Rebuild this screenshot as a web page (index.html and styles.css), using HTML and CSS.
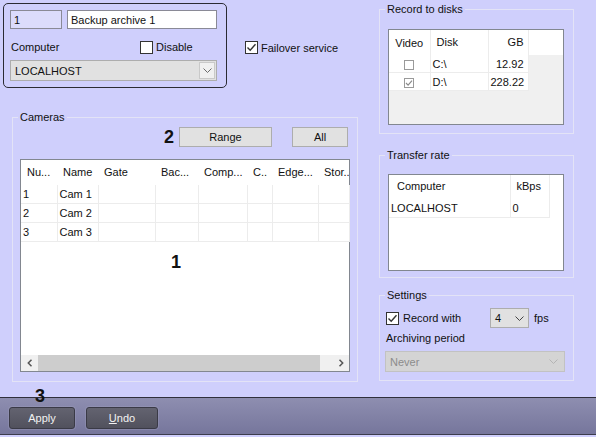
FILE: index.html
```html
<!DOCTYPE html>
<html lang="en">
<head>
    <meta charset="UTF-8">
    <meta name="viewport" content="width=device-width, initial-scale=1.0">
    <title>Backup archive</title>
    <link rel="stylesheet" href="styles.css">
</head>
<body>

<div class="window">
    <div class="main">
        <!-- Left side: archive header and camera list -->
        <div class="left-col">
            <div class="top-row">
                <div class="archive-frame">
                    <div class="frame-row">
                        <input class="field id-input" type="text" value="1">
                        <input class="field name-input" type="text" value="Backup archive 1">
                    </div>
                    <div class="frame-row computer-row">
                        <span class="computer-label">Computer</span>
                        <label class="check"><span class="box"></span>Disable</label>
                    </div>
                    <div class="select host-select">
                        <span>LOCALHOST</span>
                        <span class="drop-btn">
                            <svg width="9" height="5" viewBox="0 0 9 5"><path d="M0.5 0.5 L4.5 4.5 L8.5 0.5" fill="none" stroke="#6b6b6b"/></svg>
                        </span>
                    </div>
                </div>
                <label class="check failover">
                    <span class="box">
                        <svg width="11" height="11" viewBox="0 0 11 11"><path d="M1.5 5.5 L4.2 8.2 L9.5 2.2" fill="none" stroke="#333" stroke-width="1.4"/></svg>
                    </span>Failover service
                </label>
            </div>

            <fieldset class="group cameras">
                <legend>Cameras</legend>
                <div class="cam-buttons">
                    <span class="marker">2</span>
                    <button class="btn range-btn">Range</button>
                    <button class="btn all-btn">All</button>
                </div>
                <div class="cam-list">
                    <table class="cam-table">
                        <colgroup>
                            <col style="width:36px"><col style="width:41px"><col style="width:57px"><col style="width:43px">
                            <col style="width:49px"><col style="width:25px"><col style="width:46px"><col style="width:31px">
                        </colgroup>
                        <tr class="head">
                            <th>Nu...</th><th>Name</th><th>Gate</th><th>Bac...</th><th>Comp...</th><th>C..</th><th>Edge...</th><th>Stor..</th>
                        </tr>
                        <tr><td>1</td><td>Cam 1</td><td></td><td></td><td></td><td></td><td></td><td></td></tr>
                        <tr><td>2</td><td>Cam 2</td><td></td><td></td><td></td><td></td><td></td><td></td></tr>
                        <tr><td>3</td><td>Cam 3</td><td></td><td></td><td></td><td></td><td></td><td></td></tr>
                    </table>
                    <span class="marker marker-1">1</span>
                    <div class="hscroll">
                        <span class="scroll-arrow">
                            <svg width="6" height="8" viewBox="0 0 6 8"><path d="M4.5 0.8 L1.3 4 L4.5 7.2" fill="none" stroke="#555" stroke-width="1.5"/></svg>
                        </span>
                        <span class="thumb"></span>
                        <span class="scroll-arrow right">
                            <svg width="6" height="8" viewBox="0 0 6 8"><path d="M1.5 0.8 L4.7 4 L1.5 7.2" fill="none" stroke="#555" stroke-width="1.5"/></svg>
                        </span>
                    </div>
                </div>
            </fieldset>
        </div>

        <!-- Right side: disks, transfer rate, settings -->
        <div class="right-col">
            <fieldset class="group disks">
                <legend>Record to disks</legend>
                <div class="list disk-list">
                    <table class="list-table">
                        <colgroup>
                            <col style="width:41px"><col style="width:58px"><col style="width:40px"><col>
                        </colgroup>
                        <tr class="head">
                            <th class="center">Video</th><th class="disk-h">Disk</th><th class="num">GB</th><th></th>
                        </tr>
                        <tr>
                            <td class="center"><span class="mini-box"></span></td><td>C:\</td><td class="num">12.92</td><td class="empty"></td>
                        </tr>
                        <tr>
                            <td class="center">
                                <span class="mini-box">
                                    <svg width="8" height="8" viewBox="0 0 8 8"><path d="M1 4 L3.1 6.1 L7 1.6" fill="none" stroke="#8a8a8a" stroke-width="1.2"/></svg>
                                </span>
                            </td><td>D:\</td><td class="num">228.22</td><td class="empty"></td>
                        </tr>
                    </table>
                </div>
            </fieldset>

            <fieldset class="group transfer">
                <legend>Transfer rate</legend>
                <div class="list rate-list">
                    <table class="list-table rate-table">
                        <colgroup>
                            <col style="width:121px"><col style="width:39px"><col>
                        </colgroup>
                        <tr class="head">
                            <th class="comp-h">Computer</th><th class="kbps-h">kBps</th><th class="empty"></th>
                        </tr>
                        <tr>
                            <td>LOCALHOST</td><td>0</td><td class="empty"></td>
                        </tr>
                    </table>
                </div>
            </fieldset>

            <fieldset class="group settings">
                <legend>Settings</legend>
                <div class="fps-row">
                    <label class="check record-check">
                        <span class="box">
                            <svg width="11" height="11" viewBox="0 0 11 11"><path d="M1.5 5.5 L4.2 8.2 L9.5 2.2" fill="none" stroke="#333" stroke-width="1.4"/></svg>
                        </span>Record with
                    </label>
                    <div class="select fps-select">
                        <span>4</span>
                        <svg width="9" height="5" viewBox="0 0 9 5"><path d="M0.5 0.5 L4.5 4.5 L8.5 0.5" fill="none" stroke="#444"/></svg>
                    </div>
                    <span class="fps-label">fps</span>
                </div>
                <div class="period-label">Archiving period</div>
                <div class="select period-select">
                    <span>Never</span>
                    <svg width="9" height="5" viewBox="0 0 9 5"><path d="M0.5 0.5 L4.5 4.5 L8.5 0.5" fill="none" stroke="#b4b4b4"/></svg>
                </div>
            </fieldset>
        </div>
    </div>

    <div class="bottom-bar">
        <button class="bar-btn apply-btn">Apply</button>
        <button class="bar-btn undo-btn"><span class="hotkey">U</span>ndo</button>
    </div>
    <span class="marker marker-3">3</span>
</div>

</body>
</html>
```

FILE: styles.css
```css
body {
    margin: 0;
    background-color: #cfcffc;
    font-family: "Liberation Sans", Arial, sans-serif;
    font-size: 11px;
    color: #111;
}
.window {
    position: relative;
    width: 596px;
    height: 437px;
    overflow: hidden;
}
.main {
    display: flex;
    height: 397px;
}
.left-col {
    width: 379px;
    flex: none;
}
.right-col {
    width: 195px;
    padding-top: 2px;
}

/* header frame */
.top-row {
    display: flex;
    align-items: flex-start;
    padding-top: 3px;
    height: 85px;
}
.archive-frame {
    margin-left: 3px;
    width: 224px;
    height: 85px;
    box-sizing: border-box;
    border: 1px solid #2b2b33;
    border-radius: 5px;
    padding: 6px 0 0 6px;
}
.frame-row {
    display: flex;
    align-items: center;
}
.field {
    box-sizing: border-box;
    height: 19px;
    margin: 0;
    padding: 0 3px;
    font: inherit;
    color: #111;
    border: 1px solid #8a8a96;
    outline: none;
}
.id-input {
    width: 52px;
    background-color: #dcdcfc;
}
.name-input {
    width: 150px;
    margin-left: 5px;
    background-color: #fff;
}
.computer-row {
    margin-top: 11px;
    height: 14px;
}
.computer-label {
    width: 129px;
    padding-left: 1px;
}
.check {
    display: flex;
    align-items: center;
    gap: 3px;
}
.box {
    width: 13px;
    height: 13px;
    box-sizing: border-box;
    border: 1px solid #333;
    background-color: #fff;
    display: flex;
    align-items: center;
    justify-content: center;
}
.failover {
    margin: 38px 0 0 18px;
}

.select {
    box-sizing: border-box;
    display: flex;
    align-items: center;
    justify-content: space-between;
    background-color: #e1e1e1;
    border: 1px solid #adadad;
    padding: 0 0 0 4px;
}
.host-select {
    width: 207px;
    height: 21px;
    margin-top: 6px;
}
.drop-btn {
    width: 16px;
    height: 17px;
    margin-right: 1px;
    box-sizing: border-box;
    border: 1px solid #c9c9c9;
    background-color: #f0f0f0;
    display: flex;
    align-items: center;
    justify-content: center;
}

/* group boxes */
.group {
    margin: 0;
    min-width: 0;
    box-sizing: border-box;
    border: 1px solid #e3e3f6;
}
.group legend {
    padding: 0 2px;
    line-height: 14px;
}
.cameras {
    margin: 22px 0 0 12px;
    width: 346px;
    padding: 3px 7px 9px 7px;
}
.cameras legend {
    margin-left: -2px;
}
.cam-buttons {
    display: flex;
    justify-content: flex-end;
    align-items: center;
    height: 20px;
    padding-right: 2px;
}
.marker {
    font-size: 18px;
    font-weight: bold;
    line-height: 18px;
    color: #111;
}
.btn {
    box-sizing: border-box;
    height: 20px;
    margin: 0;
    padding: 0;
    font: inherit;
    color: #111;
    background-color: #e1e1e1;
    border: 1px solid #adadad;
}
.range-btn {
    width: 93px;
    margin-left: 5px;
}
.all-btn {
    width: 56px;
    margin-left: 20px;
}

/* camera list */
.cam-list {
    position: relative;
    margin-top: 12px;
    width: 330px;
    height: 213px;
    box-sizing: border-box;
    border: 1px solid #828790;
    background-color: #fff;
    display: flex;
    flex-direction: column;
}
.cam-table {
    border-collapse: collapse;
    table-layout: fixed;
    width: 328px;
}
.cam-table th {
    height: 24px;
    padding: 0 0 1px 6px;
    text-align: left;
    font-weight: normal;
    white-space: nowrap;
    overflow: hidden;
}
.cam-table td {
    height: 18px;
    padding: 0 2px;
    border-right: 1px solid #ececec;
    border-bottom: 1px solid #ececec;
    white-space: nowrap;
}
.marker-1 {
    position: absolute;
    left: 150px;
    top: 93px;
}
.hscroll {
    margin-top: auto;
    height: 16px;
    display: flex;
    background-color: #f0f0f0;
}
.scroll-arrow {
    width: 17px;
    display: flex;
    align-items: center;
    justify-content: center;
}
.scroll-arrow.right {
    margin-left: auto;
}
.thumb {
    width: 282px;
    background-color: #cdcdcd;
}

/* small lists on the right */
.disks {
    width: 195px;
    padding: 13px 9px 8px 8px;
}
.disks legend {
    margin-left: -3px;
}
.transfer {
    width: 195px;
    margin-top: 14px;
    padding: 12px 9px 6px 8px;
}
.transfer legend {
    margin-left: -3px;
}
.list {
    box-sizing: border-box;
    width: 176px;
    border: 1px solid #828790;
}
.disk-list {
    height: 96px;
    background-color: #f0f0f0;
}
.rate-list {
    height: 97px;
    background-color: #fff;
}
.list-table {
    border-collapse: collapse;
    table-layout: fixed;
    width: 174px;
}
.list-table th {
    height: 24px;
    font-weight: normal;
    text-align: left;
    background-color: #fff;
    border-right: 1px solid #ececec;
    padding: 0 0 1px 6px;
}
.list-table td {
    height: 17px;
    background-color: #fff;
    border-right: 1px solid #ececec;
    border-bottom: 1px solid #ececec;
    padding: 0 2px;
}
.list-table .center {
    text-align: center;
    padding: 0;
}
.list-table .num {
    text-align: right;
    padding-right: 4px;
}
.list-table td.empty {
    background-color: transparent;
    border: none;
}
.list-table th:last-child {
    border-right: none;
}
.mini-box {
    display: inline-flex;
    align-items: center;
    justify-content: center;
    vertical-align: middle;
    width: 10px;
    height: 10px;
    box-sizing: border-box;
    border: 1px solid #9a9a9a;
    background-color: #fff;
}
.rate-table th {
    height: 22px;
}
.rate-table td {
    height: 19px;
}
.rate-table .comp-h {
    padding-left: 8px;
}
.rate-table .kbps-h {
    padding-left: 6px;
}
.rate-table td.empty {
    background-color: #fff;
}
.rate-table th.empty {
    border-right: none;
}

/* settings */
.settings {
    width: 195px;
    margin-top: 10px;
    padding: 6px 8px 8px 5px;
}
.fps-row {
    display: flex;
    align-items: center;
    height: 20px;
}
.record-check {
    width: 104px;
    margin-left: 1px;
    gap: 4px;
}
.fps-select {
    width: 39px;
    height: 20px;
    padding-right: 4px;
}
.fps-label {
    margin-left: 5px;
}
.period-label {
    margin-top: 3px;
    line-height: 14px;
    padding-left: 1px;
}
.period-select {
    margin-top: 6px;
    width: 180px;
    height: 21px;
    padding-right: 6px;
    color: #8c8c8c;
    background-color: #d4d4d4;
    border-color: #c2c2c2;
}

/* bottom bar */
.bottom-bar {
    height: 38px;
    box-sizing: border-box;
    border-top: 1px solid #30303c;
    border-bottom: 1px solid #3c3c4c;
    background: linear-gradient(#8e8eb0, #76769c);
    padding: 9px 0 0 9px;
    display: flex;
    align-items: flex-start;
    gap: 11px;
}
.bar-btn {
    height: 22px;
    box-sizing: border-box;
    margin: 0;
    padding: 0;
    font: inherit;
    color: #f2f2f2;
    background: linear-gradient(#636370, #51515d);
    border: 1px solid #3a3a46;
    border-radius: 3px;
    box-shadow: 0 0 0 1px rgba(160, 160, 190, 0.35);
}
.apply-btn {
    width: 66px;
}
.undo-btn {
    width: 72px;
}
.hotkey {
    text-decoration: underline;
}
.marker-3 {
    position: absolute;
    left: 35px;
    top: 387px;
}
```
